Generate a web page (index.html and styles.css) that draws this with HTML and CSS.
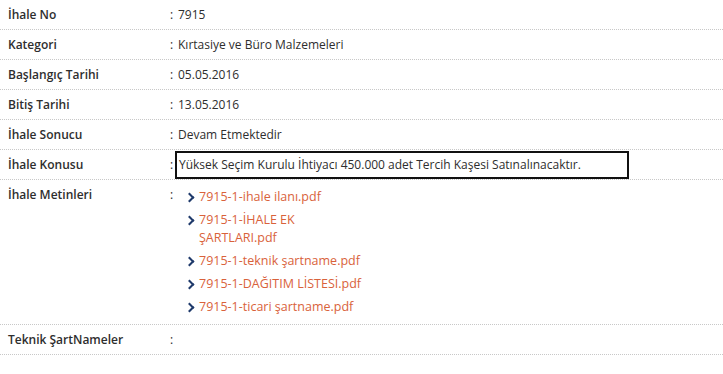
FILE: index.html
```html
<!DOCTYPE html>
<html lang="tr">
<head>
  <meta charset="UTF-8" />
  <meta name="viewport" content="width=device-width, initial-scale=1" />
  <title>İhale Detayı</title>
  <link rel="stylesheet" href="styles.css">
</head>
<body>
  <div class="detail">
    <div class="row">
      <div class="label">İhale No</div>
      <div class="colon">:</div>
      <div class="value">7915</div>
    </div>
    <div class="row">
      <div class="label">Kategori</div>
      <div class="colon">:</div>
      <div class="value">Kırtasiye ve Büro Malzemeleri</div>
    </div>
    <div class="row">
      <div class="label">Başlangıç Tarihi</div>
      <div class="colon">:</div>
      <div class="value">05.05.2016</div>
    </div>
    <div class="row">
      <div class="label">Bitiş Tarihi</div>
      <div class="colon">:</div>
      <div class="value">13.05.2016</div>
    </div>
    <div class="row">
      <div class="label">İhale Sonucu</div>
      <div class="colon">:</div>
      <div class="value">Devam Etmektedir</div>
    </div>
    <div class="row">
      <div class="label">İhale Konusu</div>
      <div class="colon">:</div>
      <div class="value"><span class="subject">Yüksek Seçim Kurulu İhtiyacı 450.000 adet Tercih Kaşesi Satınalınacaktır.</span></div>
    </div>
    <div class="row files">
      <div class="label">İhale Metinleri</div>
      <div class="colon">:</div>
      <ul class="file-list">
        <li><a href="#">7915-1-ihale ilanı.pdf</a></li>
        <li><a href="#">7915-1-İHALE EK ŞARTLARI.pdf</a></li>
        <li><a href="#">7915-1-teknik şartname.pdf</a></li>
        <li><a href="#">7915-1-DAĞITIM LİSTESİ.pdf</a></li>
        <li><a href="#">7915-1-ticari şartname.pdf</a></li>
      </ul>
    </div>
    <div class="row">
      <div class="label">Teknik ŞartNameler</div>
      <div class="colon">:</div>
      <div class="value"></div>
    </div>
  </div>
</body>
</html>
```

FILE: styles.css
```css
* { box-sizing: border-box; }
body {
  margin: 0;
  font-family: 'Open Sans', sans-serif;
  font-size: 12px;
  color: #2e2e2e;
  background: #fff;
}
.detail {
  width: 723px;
}
.row {
  display: grid;
  grid-template-columns: 170px 8px 1fr;
  align-items: center;
  height: 30px;
  border-bottom: 1px dotted #c8c8c8;
}
.label {
  padding-left: 8px;
  font-weight: 600;
  color: #2e2e2e;
}
.subject {
  display: inline-block;
  width: 454px;
  margin-left: -3px;
  padding: 3px 0 4px 2px;
  border: 2px solid #111;
  line-height: 17px;
}
.row.files {
  height: 145px;
  align-items: start;
  padding-top: 6px;
}
.file-list {
  list-style: none;
  margin: 0;
  padding: 2px 0 0 8px;
}
.file-list li {
  position: relative;
  padding-left: 13px;
  margin-bottom: 5px;
  width: 180px;
  line-height: 18px;
  font-size: 12.5px;
}
.file-list li::before {
  content: '';
  position: absolute;
  left: 0;
  top: 6px;
  width: 5px;
  height: 5px;
  border-top: 2px solid #1f3a6b;
  border-right: 2px solid #1f3a6b;
  transform: rotate(45deg);
}
.file-list a {
  color: #d9623b;
  text-decoration: none;
}
```
